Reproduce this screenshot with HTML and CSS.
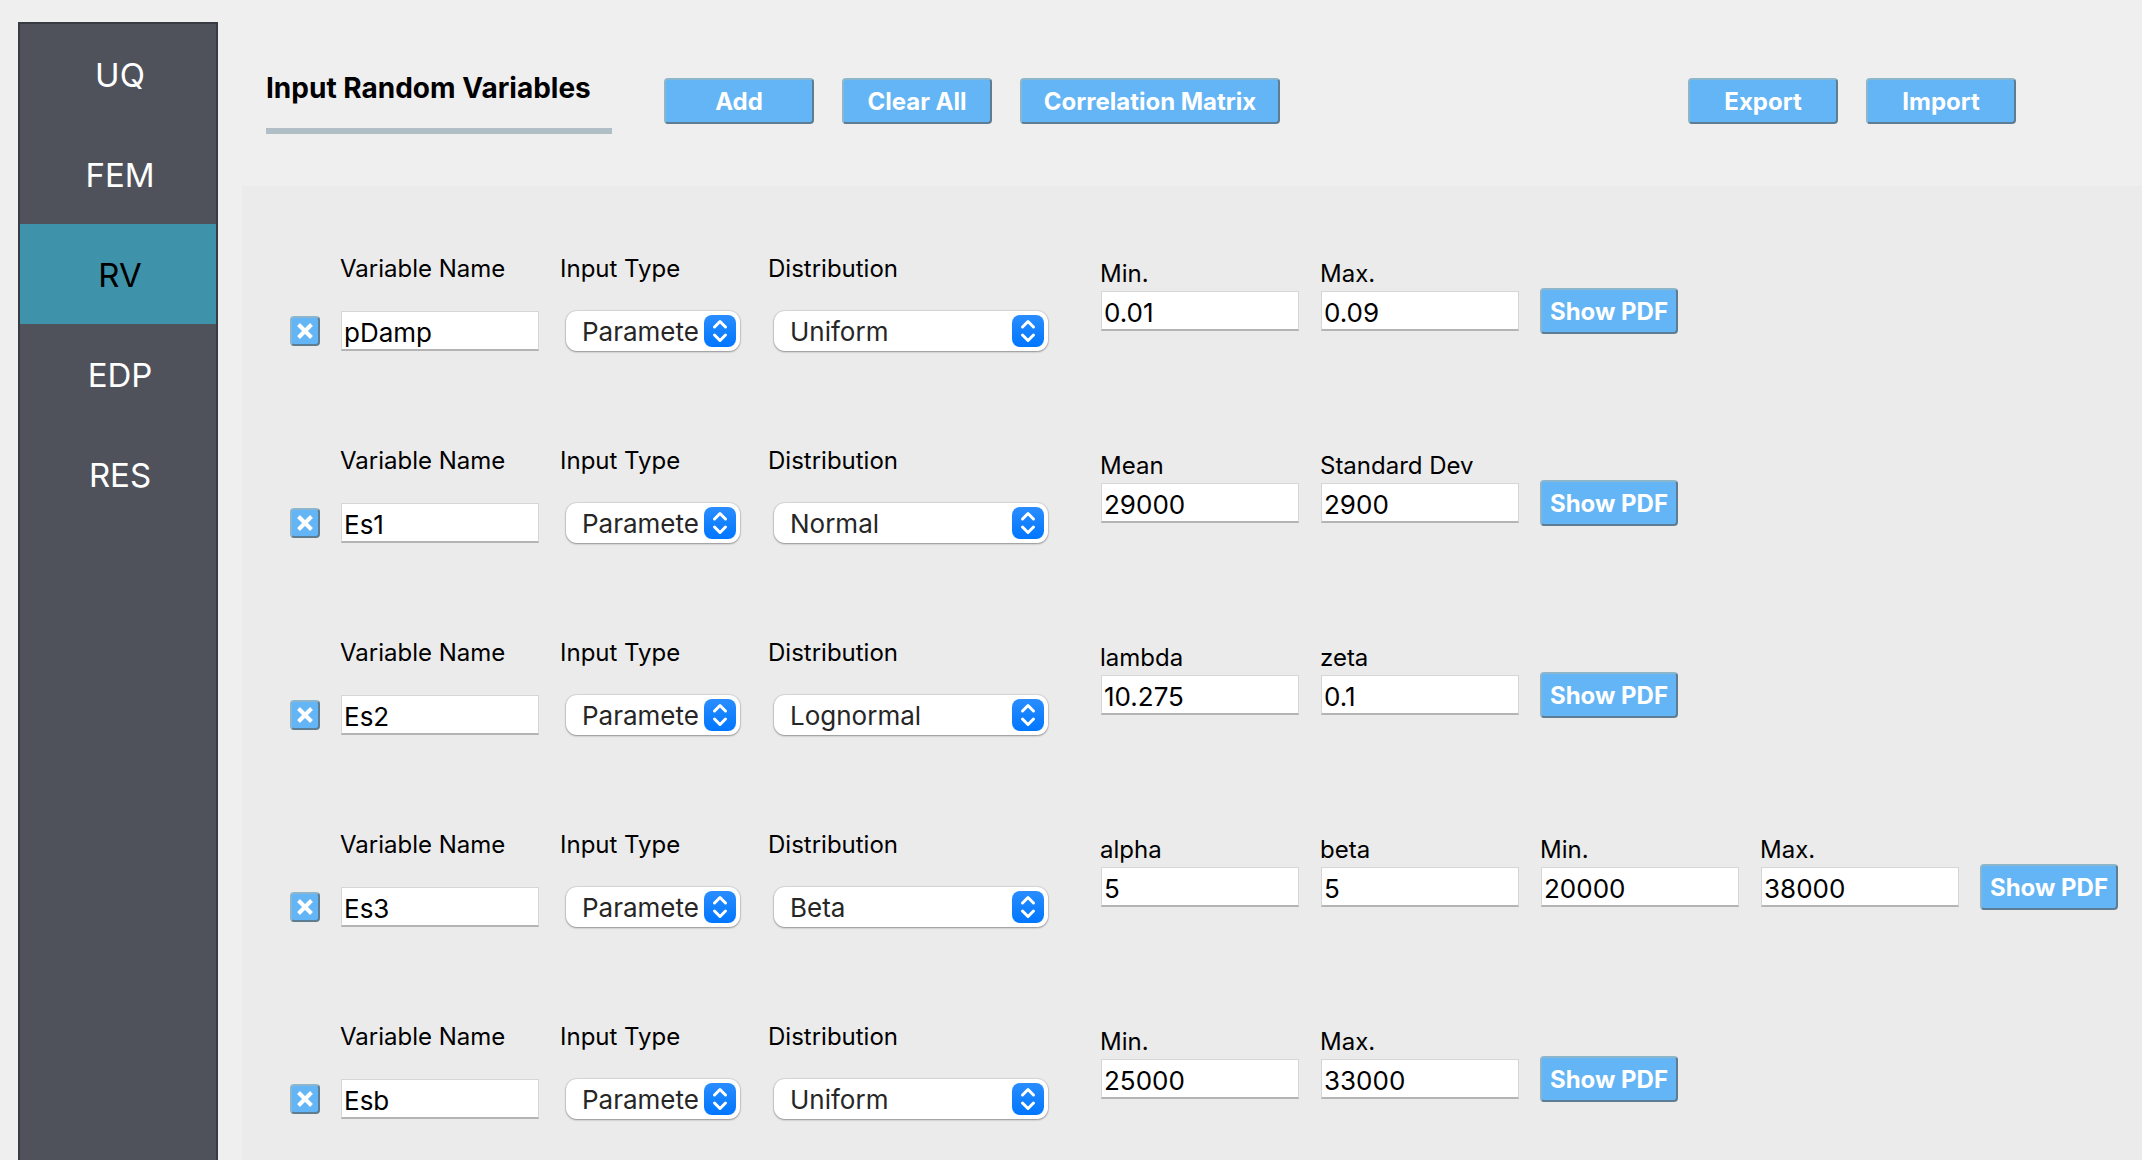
FILE: index.html
```html
<!DOCTYPE html>
<html lang="en">
<head>
<meta charset="utf-8">
<title>Input Random Variables</title>
<link rel="stylesheet" href="styles.css">
</head>
<body>
<svg class="sprite" aria-hidden="true">
  <defs><linearGradient id="blue" x1="0" y1="0" x2="0" y2="1"><stop offset="0" stop-color="#2a8dff"/><stop offset="1" stop-color="#0076ff"/></linearGradient></defs>
  <symbol id="updown" viewBox="0 0 32 32">
    <rect width="32" height="32" rx="8" fill="url(#blue)"/>
    <path d="M10.500 12 16 6.500 21.500 12M10.500 20 16 25.500 21.500 20" fill="none" stroke="#fff" stroke-width="3" stroke-linecap="round" stroke-linejoin="round"/>
  </symbol>
  <symbol id="cross" viewBox="0 0 16 16">
    <path d="M1.500 1.500 14.500 14.500M14.500 1.500 1.500 14.500" stroke="#fff" stroke-width="4"/>
  </symbol>
</svg>
<nav class="sidebar">
  <a class="nav-item" href="#uq">UQ</a>
  <a class="nav-item" href="#fem">FEM</a>
  <a class="nav-item active" href="#rv" aria-current="page">RV</a>
  <a class="nav-item" href="#edp">EDP</a>
  <a class="nav-item" href="#res">RES</a>
</nav>
<main class="main">
  <header class="header">
    <h1 class="title">Input Random Variables</h1>
    <button class="btn" type="button">Add</button>
    <button class="btn" type="button">Clear All</button>
    <button class="btn btn-wide" type="button">Correlation Matrix</button>
    <span class="spacer"></span>
    <button class="btn" type="button">Export</button>
    <button class="btn" type="button">Import</button>
  </header>
  <div class="panel">
    <section class="row">
      <button class="btn delete" type="button" aria-label="Remove pDamp"><svg class="cross"><use href="#cross"/></svg></button>
      <div class="column"><label for="n1">Variable Name</label><input class="field" id="n1" value="pDamp"></div>
      <div class="column"><label for="t1">Input Type</label><div class="combo combo-type"><select id="t1"><option>Parameter</option></select><svg class="arrows"><use href="#updown"/></svg></div></div>
      <div class="column"><label for="d1">Distribution</label><div class="combo combo-dist"><select id="d1"><option>Uniform</option></select><svg class="arrows"><use href="#updown"/></svg></div></div>
      <div class="params">
        <div class="param"><label for="a1">Min.</label><input class="field" id="a1" value="0.01"></div>
        <div class="param"><label for="b1">Max.</label><input class="field" id="b1" value="0.09"></div>
        <button class="btn show" type="button">Show PDF</button>
      </div>
    </section>
    <section class="row">
      <button class="btn delete" type="button" aria-label="Remove Es1"><svg class="cross"><use href="#cross"/></svg></button>
      <div class="column"><label for="n2">Variable Name</label><input class="field" id="n2" value="Es1"></div>
      <div class="column"><label for="t2">Input Type</label><div class="combo combo-type"><select id="t2"><option>Parameter</option></select><svg class="arrows"><use href="#updown"/></svg></div></div>
      <div class="column"><label for="d2">Distribution</label><div class="combo combo-dist"><select id="d2"><option>Normal</option></select><svg class="arrows"><use href="#updown"/></svg></div></div>
      <div class="params">
        <div class="param"><label for="a2">Mean</label><input class="field" id="a2" value="29000"></div>
        <div class="param"><label for="b2">Standard Dev</label><input class="field" id="b2" value="2900"></div>
        <button class="btn show" type="button">Show PDF</button>
      </div>
    </section>
    <section class="row">
      <button class="btn delete" type="button" aria-label="Remove Es2"><svg class="cross"><use href="#cross"/></svg></button>
      <div class="column"><label for="n3">Variable Name</label><input class="field" id="n3" value="Es2"></div>
      <div class="column"><label for="t3">Input Type</label><div class="combo combo-type"><select id="t3"><option>Parameter</option></select><svg class="arrows"><use href="#updown"/></svg></div></div>
      <div class="column"><label for="d3">Distribution</label><div class="combo combo-dist"><select id="d3"><option>Lognormal</option></select><svg class="arrows"><use href="#updown"/></svg></div></div>
      <div class="params">
        <div class="param"><label for="a3">lambda</label><input class="field" id="a3" value="10.275"></div>
        <div class="param"><label for="b3">zeta</label><input class="field" id="b3" value="0.1"></div>
        <button class="btn show" type="button">Show PDF</button>
      </div>
    </section>
    <section class="row">
      <button class="btn delete" type="button" aria-label="Remove Es3"><svg class="cross"><use href="#cross"/></svg></button>
      <div class="column"><label for="n4">Variable Name</label><input class="field" id="n4" value="Es3"></div>
      <div class="column"><label for="t4">Input Type</label><div class="combo combo-type"><select id="t4"><option>Parameter</option></select><svg class="arrows"><use href="#updown"/></svg></div></div>
      <div class="column"><label for="d4">Distribution</label><div class="combo combo-dist"><select id="d4"><option>Beta</option></select><svg class="arrows"><use href="#updown"/></svg></div></div>
      <div class="params">
        <div class="param"><label for="a4">alpha</label><input class="field" id="a4" value="5"></div>
        <div class="param"><label for="b4">beta</label><input class="field" id="b4" value="5"></div>
        <div class="param"><label for="c4">Min.</label><input class="field" id="c4" value="20000"></div>
        <div class="param"><label for="e4">Max.</label><input class="field" id="e4" value="38000"></div>
        <button class="btn show" type="button">Show PDF</button>
      </div>
    </section>
    <section class="row">
      <button class="btn delete" type="button" aria-label="Remove Esb"><svg class="cross"><use href="#cross"/></svg></button>
      <div class="column"><label for="n5">Variable Name</label><input class="field" id="n5" value="Esb"></div>
      <div class="column"><label for="t5">Input Type</label><div class="combo combo-type"><select id="t5"><option>Parameter</option></select><svg class="arrows"><use href="#updown"/></svg></div></div>
      <div class="column"><label for="d5">Distribution</label><div class="combo combo-dist"><select id="d5"><option>Uniform</option></select><svg class="arrows"><use href="#updown"/></svg></div></div>
      <div class="params">
        <div class="param"><label for="a5">Min.</label><input class="field" id="a5" value="25000"></div>
        <div class="param"><label for="b5">Max.</label><input class="field" id="b5" value="33000"></div>
        <button class="btn show" type="button">Show PDF</button>
      </div>
    </section>
  </div>
</main>
</body>
</html>
```
FILE: styles.css
```css
* { box-sizing: border-box; }

body {
  margin: 0;
  min-height: 100vh;
  display: flex;
  background: #efefef;
  color: #000;
  font-family: Inter, "Liberation Sans", sans-serif;
  font-size: 24px;
  line-height: 30px;
}

button, input, select { font: inherit; }

.sprite { position: absolute; width: 0; height: 0; }

/* Navigation */
.sidebar {
  flex: none;
  width: 200px;
  margin: 22px 24px 0 18px;
  background: #4f525b;
  border: 2px solid #383b42;
  border-bottom: 0;
}

.nav-item {
  display: flex;
  align-items: center;
  justify-content: center;
  height: 100px;
  padding-top: 2px;
  padding-left: 4px;
  color: #fff;
  font-size: 33px;
  text-decoration: none;
}

.nav-item.active { background: #3e93aa; color: #000; }

/* Header */
.main {
  flex: 1;
  min-width: 0;
  display: flex;
  flex-direction: column;
}

.header {
  display: flex;
  gap: 28px;
  height: 186px;
  padding: 78px 126px 0 24px;
}

.title {
  width: 346px;
  height: 68px;
  margin: -12px 24px 0 0;
  padding-top: 6px;
  border-bottom: 6px solid #b0bec5;
  font-size: 28px;
  font-weight: 700;
  line-height: 32px;
  white-space: nowrap;
}

.spacer { flex: 1; }

.btn {
  flex: none;
  width: 150px;
  height: 46px;
  padding: 2px 0 0;
  border: 2px solid;
  border-color: #8bb6cc #5f7d92 #5f7d92 #8bb6cc;
  border-radius: 4px;
  background: #64b5f6;
  color: #fff;
  font-weight: 700;
  white-space: nowrap;
}

.btn-wide { width: 260px; }

/* Variable list */
.panel {
  flex: 1;
  padding: 68px 24px 0 48px;
  background: #ebebeb;
}

.row {
  display: grid;
  grid-template-columns: 50px 220px 208px 332px 1fr;
  margin-bottom: 95px;
}

.row:last-child { margin-bottom: 0; }

.column, .param { display: flex; flex-direction: column; }
.column { gap: 27px; }

.delete {
  display: flex;
  align-items: center;
  justify-content: center;
  width: 30px;
  height: 30px;
  margin-top: 62px;
  padding: 0;
}

.cross { width: 16px; height: 16px; }

.field {
  width: 198px;
  height: 40px;
  margin-left: 1px;
  padding: 3px 2px 0;
  border: 1px solid #d6d6d6;
  border-bottom: 2px solid #b4b4b4;
  border-radius: 0;
  background: #fff;
  color: #000;
  font-size: 26px;
}

.combo {
  position: relative;
  height: 40px;
  margin-left: 6px;
}

.combo-type { width: 174px; }
.combo-dist { width: 274px; }

.combo select {
  appearance: none;
  width: 100%;
  height: 40px;
  padding: 2px 42px 0 16px;
  border: 0;
  border-radius: 11px;
  background: #fff;
  box-shadow: 0 0 1px 1px #00000018, 0 1px 2px #00000050;
  color: #262626;
  font-size: 26px;
}

.arrows {
  position: absolute;
  top: 4px;
  right: 4px;
  width: 32px;
  height: 32px;
  pointer-events: none;
}

.params { display: flex; gap: 21px; padding-top: 5px; }
.param { gap: 2px; }
.show { width: 138px; margin-top: 29px; }
```
